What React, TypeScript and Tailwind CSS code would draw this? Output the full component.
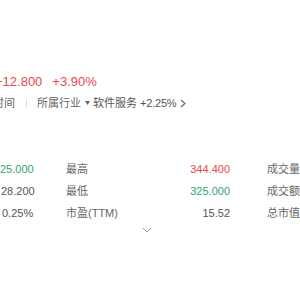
import React from "react";

const red = "text-[#e8494b]";
const green = "text-[#2ea86c]";

function Row({ v1, c1, l2, v2, c2, l3, s1 }: { v1: string; c1: string; l2: string; v2: string; c2: string; l3: string; s1: string }) {
  return (
    <div className="flex h-[22px] items-center text-[11px] leading-[22px]">
      <div className={`w-[66px] shrink-0 ${c1} ${s1}`}>{v1}</div>
      <div className="w-[70px] shrink-0 text-[#666]">{l2}</div>
      <div className={`w-[94px] shrink-0 text-right ${c2}`}>{v2}</div>
      <div className="ml-[37px] shrink-0 whitespace-nowrap text-[#666]">{l3}</div>
    </div>
  );
}

export default function App() {
  return (
    <div
      className="h-[300px] w-[300px] overflow-hidden bg-white"
      style={{ fontFamily: '"Liberation Sans","Noto Sans CJK SC",sans-serif' }}
    >
      <div className="pt-[72px]">
        <div className={`-ml-[5px] flex h-[20px] items-center whitespace-nowrap text-[13px] ${red}`}>
          <span>+12.800</span>
          <span className="ml-[10px]">+3.90%</span>
        </div>
        <div className="-ml-[7px] mt-[1px] flex h-[20px] items-center whitespace-nowrap text-[11px] text-[#555]">
          <span className="text-[#666]">时间</span>
          <span className="ml-[11px] h-[9px] w-px bg-[#ddd]" />
          <span className="ml-[10px] text-[#666]">所属行业</span>
          <svg className="ml-[4px]" width="5" height="4" viewBox="0 0 5 4">
            <path d="M0 0 L5 0 L2.5 4 Z" fill="#666" />
          </svg>
          <span className="ml-[3px]">软件服务</span>
          <span className="ml-[3px] tracking-[-0.2px]">+2.25%</span>
          <svg className="ml-[4px]" width="6" height="9" viewBox="0 0 6 9">
            <path d="M1 1 L5 4.5 L1 8" fill="none" stroke="#666" strokeWidth="1.1" />
          </svg>
        </div>
      </div>
      <div className="mt-[45px]">
        <Row v1="25.000" c1={green} s1="" l2="最高" v2="344.400" c2={red} l3="成交量" />
        <Row v1="28.200" c1="text-[#555]" s1="pl-[1px]" l2="最低" v2="325.000" c2={green} l3="成交额" />
        <Row v1="0.25%" c1="text-[#555]" s1="pl-[2px]" l2="市盈(TTM)" v2="15.52" c2="text-[#555]" l3="总市值" />
      </div>
      <div className="mt-[3px] flex justify-center pr-[6px]">
        <svg width="10" height="6" viewBox="0 0 10 6">
          <path d="M1 1 L5 5 L9 1" fill="none" stroke="#999" strokeWidth="1" />
        </svg>
      </div>
    </div>
  );
}
